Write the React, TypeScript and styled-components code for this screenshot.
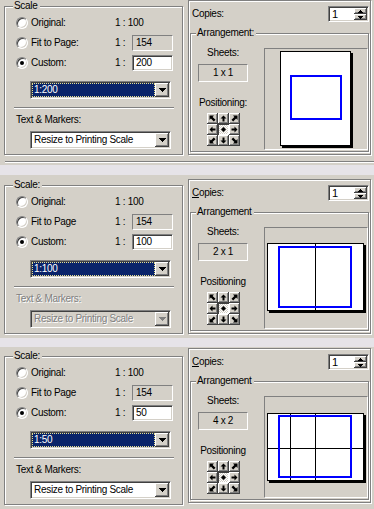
import React from "react";
import styled, { createGlobalStyle, css } from "styled-components";

const FACE = "#d4d0c8";
const SHADOW = "#808080";
const DARK = "#404040";
const NAVY = "#0a246a";

const GlobalStyle = createGlobalStyle`
  html, body { margin: 0; padding: 0; background: ${FACE}; }
  body { overflow: hidden; }
`;

const raised = css`
  background-color: ${FACE};
  box-shadow: inset -1px -1px 0 ${DARK}, inset 1px 1px 0 #fff,
    inset -2px -2px 0 ${SHADOW}, inset 2px 2px 0 ${FACE};
`;

const sunken = css`
  border: 1px solid;
  border-color: ${SHADOW} #fff #fff ${SHADOW};
  box-shadow: inset 1px 1px 0 ${DARK}, inset -1px -1px 0 ${FACE};
`;

const thin = css`
  border: 1px solid;
  border-color: ${SHADOW} #fff #fff ${SHADOW};
`;

const etched = css`
  position: relative;
  box-sizing: border-box;
  border: 1px solid ${SHADOW};
  box-shadow: inset 1px 1px 0 #fff, 1px 1px 0 #fff;
`;

const Screen = styled.div`
  width: 374px;
  height: 509px;
  overflow: hidden;
  display: flex;
  flex-direction: column;
  background: ${FACE};
  color: #000;
  font-family: "Liberation Sans", Arial, sans-serif;
  font-size: 10px;
  letter-spacing: -0.3px;
  line-height: 12px;
`;

const Panel = styled.section<{ $h: number }>`
  height: ${(p) => p.$h}px;
  flex: none;
  display: flex;
  flex-direction: column;
`;

const GroupsRow = styled.div`
  display: flex;
  align-items: flex-start;
  padding-left: 4px;
  flex: none;
`;

const Band = styled.div<{ $h: number }>`
  height: ${(p) => p.$h}px;
  flex: none;
  background: #e6e3e8;
`;

const EtchedRule = styled.div<{ $w: number; $ml: number; $mt: number }>`
  flex: none;
  width: ${(p) => p.$w}px;
  height: 0;
  margin: ${(p) => p.$mt}px 0 0 ${(p) => p.$ml}px;
  border-top: 1px solid ${SHADOW};
  border-bottom: 1px solid #fff;
`;

const ScaleGroup = styled.div<{ $mt: number }>`
  ${etched};
  flex: none;
  width: 179px;
  height: 149px;
  margin-top: ${(p) => p.$mt}px;
  padding-top: 6px;
  display: flex;
  flex-direction: column;
  align-items: flex-start;
`;

const Legend = styled.span<{ $left: number }>`
  position: absolute;
  top: -7px;
  left: ${(p) => p.$left}px;
  padding: 0 2px 0 1px;
  background: ${FACE};
  white-space: nowrap;
`;

const OptionRow = styled.div`
  display: flex;
  align-items: center;
  height: 20px;
  padding-left: 11px;
  white-space: pre;
`;

const Radio = styled.span<{ $on?: boolean }>`
  position: relative;
  flex: none;
  box-sizing: border-box;
  width: 12px;
  height: 12px;
  border-radius: 50%;
  background: #fff;
  border: 1px solid;
  border-color: ${SHADOW} #fff #fff ${SHADOW};
  box-shadow: inset 1px 1px 0 ${DARK}, inset -1px -1px 0 ${FACE};
  &::after {
    content: "";
    display: ${(p) => (p.$on ? "block" : "none")};
    position: absolute;
    left: 3px;
    top: 3px;
    width: 4px;
    height: 4px;
    border-radius: 50%;
    background: #000;
  }
`;

const OptionLabel = styled.span`
  width: 84px;
  margin-left: 3px;
`;

const RatioPrefix = styled.span`
  width: 17px;
`;

const Field = styled.div<{ $readonly?: boolean }>`
  box-sizing: border-box;
  width: 41px;
  height: 16px;
  display: flex;
  align-items: center;
  padding-left: 3px;
  ${(p) =>
    p.$readonly
      ? css`
          ${thin};
          background: ${FACE};
        `
      : css`
          ${sunken};
          background: #fff;
        `}
`;

const Combo = styled.div<{ $mt: number; $disabled?: boolean }>`
  box-sizing: border-box;
  width: 141px;
  height: 18px;
  margin: ${(p) => p.$mt}px 0 0 25px;
  padding: 1px;
  display: flex;
  ${sunken};
  background: ${(p) => (p.$disabled ? FACE : "#fff")};
`;

const ComboValue = styled.div<{ $selected?: boolean; $disabled?: boolean }>`
  flex: 1;
  display: flex;
  align-items: center;
  padding-left: 2px;
  white-space: nowrap;
  overflow: hidden;
  ${(p) =>
    p.$selected &&
    css`
      background: ${NAVY};
      color: #fff;
      outline: 1px dotted #e8e090;
      outline-offset: -1px;
    `}
  ${(p) =>
    p.$disabled &&
    css`
      color: ${SHADOW};
      text-shadow: 1px 1px 0 #fff;
    `}
`;

const ComboButton = styled.div`
  flex: none;
  width: 14px;
  height: 14px;
  display: flex;
  align-items: center;
  justify-content: center;
  ${raised};
`;

const Caption = styled.span<{ $disabled?: boolean }>`
  margin: 5px 0 0 11px;
  white-space: nowrap;
  ${(p) =>
    p.$disabled &&
    css`
      color: ${SHADOW};
      text-shadow: 1px 1px 0 #fff;
    `}
`;

const Pane = styled.div<{ $mt: number }>`
  ${etched};
  flex: none;
  width: 183px;
  height: 155px;
  margin: ${(p) => p.$mt}px 0 0 5px;
  display: flex;
  flex-direction: column;
`;

const CopiesRow = styled.div`
  display: flex;
  align-items: center;
  height: 16px;
  margin-top: 5px;
  padding: 0 1px 0 3px;
`;

const CopiesLabel = styled.span`
  flex: 1;
  white-space: nowrap;
`;

const Spin = styled.div`
  box-sizing: border-box;
  width: 41px;
  height: 16px;
  display: flex;
  padding: 1px;
  ${sunken};
  background: #fff;
`;

const SpinValue = styled.span`
  flex: 1;
  display: flex;
  align-items: center;
  padding-left: 2px;
  font-size: 11px;
`;

const SpinButtons = styled.div`
  display: flex;
  flex-direction: column;
  width: 13px;
`;

const SpinButton = styled.div`
  flex: 1;
  display: flex;
  align-items: center;
  justify-content: center;
  ${raised};
`;

const ArrangeGroup = styled.div`
  ${etched};
  flex: none;
  width: 179px;
  height: 119px;
  margin: 11px 0 0 1px;
  display: flex;
  align-items: flex-start;
`;

const SheetsColumn = styled.div`
  width: 64px;
  padding-top: 13px;
  display: flex;
  flex-direction: column;
  align-items: center;
`;

const SmallLabel = styled.span<{ $mt?: number }>`
  margin-top: ${(p) => p.$mt ?? 0}px;
  white-space: nowrap;
`;

const SheetsBox = styled.div`
  box-sizing: border-box;
  width: 50px;
  height: 18px;
  margin-top: 5px;
  display: flex;
  align-items: center;
  justify-content: center;
  ${thin};
`;

const PosGrid = styled.div`
  margin-top: 4px;
  display: grid;
  grid-template-columns: repeat(3, 11px);
  grid-auto-rows: 11px;
`;

const PosCell = styled.div<{ $pressed?: boolean }>`
  box-sizing: border-box;
  display: flex;
  align-items: center;
  justify-content: center;
  ${(p) =>
    p.$pressed
      ? css`
          background-color: #fff;
          background-image: conic-gradient(${FACE} 25%, #fff 0 50%, ${FACE} 0 75%, #fff 0);
          background-size: 2px 2px;
          box-shadow: inset 1px 1px 0 ${DARK}, inset -1px -1px 0 #fff;
        `
      : raised}
`;

const PreviewFrame = styled.div`
  box-sizing: border-box;
  width: 104px;
  height: 102px;
  margin: 14px 0 0 9px;
  ${thin};
  & > svg {
    display: block;
  }
`;

/* ---------- icons ---------- */

const DownTri = ({ disabled }: { disabled?: boolean }) => (
  <svg width="7" height="4" viewBox="0 0 7 4" shapeRendering="crispEdges">
    <polygon points="0,0 7,0 3.5,4" fill={disabled ? SHADOW : "#000"} />
  </svg>
);

const SmallTri = ({ up }: { up?: boolean }) => (
  <svg width="5" height="3" viewBox="0 0 5 3" shapeRendering="crispEdges">
    <polygon points={up ? "2.5,0 5,3 0,3" : "0,0 5,0 2.5,3"} fill="#000" />
  </svg>
);

const ARROW_N = "3.5,0.5 6.5,3.5 4.5,3.5 4.5,6.5 2.5,6.5 2.5,3.5 0.5,3.5";
const ARROW_NW = "0.5,0.5 5,0.5 3.6,1.9 6.5,4.8 4.8,6.5 1.9,3.6 0.5,5";
const DIAMOND = "3.5,1 6,3.5 3.5,6 1,3.5";

const PosArrow = ({ shape, rot }: { shape: string; rot: number }) => (
  <svg width="7" height="7" viewBox="0 0 7 7">
    <polygon points={shape} fill="#000" transform={`rotate(${rot} 3.5 3.5)`} />
  </svg>
);

const POS_CELLS: { shape: string; rot: number; pressed?: boolean }[] = [
  { shape: ARROW_NW, rot: 0 },
  { shape: ARROW_N, rot: 0 },
  { shape: ARROW_NW, rot: 90 },
  { shape: ARROW_N, rot: 270 },
  { shape: DIAMOND, rot: 0, pressed: true },
  { shape: ARROW_N, rot: 90 },
  { shape: ARROW_NW, rot: 270 },
  { shape: ARROW_N, rot: 180 },
  { shape: ARROW_NW, rot: 180 },
];

type PageCfg = {
  x: number;
  y: number;
  w: number;
  h: number;
  vlines: number[];
  hlines: number[];
  blue: [number, number, number, number];
};

const PagePreview = ({ cfg }: { cfg: PageCfg }) => (
  <svg width="102" height="100" viewBox="1 1 102 100">
    <rect x={cfg.x + 2} y={cfg.y + 2} width={cfg.w} height={cfg.h} fill="#000" />
    <rect
      x={cfg.x + 0.5}
      y={cfg.y + 0.5}
      width={cfg.w - 1}
      height={cfg.h - 1}
      fill="#fff"
      stroke="#000"
    />
    {cfg.vlines.map((v) => (
      <line key={`v${v}`} x1={v + 0.5} y1={cfg.y} x2={v + 0.5} y2={cfg.y + cfg.h} stroke="#000" />
    ))}
    {cfg.hlines.map((h) => (
      <line key={`h${h}`} x1={cfg.x} y1={h + 0.5} x2={cfg.x + cfg.w} y2={h + 0.5} stroke="#000" />
    ))}
    <rect
      x={cfg.blue[0] + 1}
      y={cfg.blue[1] + 1}
      width={cfg.blue[2] - 2}
      height={cfg.blue[3] - 2}
      fill="none"
      stroke="#0000ff"
      strokeWidth="2"
    />
  </svg>
);

/* ---------- data ---------- */

type PanelCfg = {
  h: number;
  groupTop: number;
  paneTop: number;
  legend: string;
  fit: string;
  custom: string;
  combo: string;
  tmDisabled: boolean;
  copiesKey: boolean;
  arrange: string;
  sheets: string;
  positioning: string;
  rule: boolean;
  band: number;
  page: PageCfg;
};

const PANELS: PanelCfg[] = [
  {
    h: 165,
    groupTop: 6,
    paneTop: 0,
    legend: "Scale",
    fit: "Fit to Page:",
    custom: "200",
    combo: "1:200",
    tmDisabled: false,
    copiesKey: false,
    arrange: "Arrangement:",
    sheets: "1 x 1",
    positioning: "Positioning:",
    rule: true,
    band: 10,
    page: { x: 16, y: 3, w: 71, h: 95, vlines: [], hlines: [], blue: [26, 27, 52, 45] },
  },
  {
    h: 163,
    groupTop: 10,
    paneTop: 4,
    legend: "Scale:",
    fit: "Fit to Page",
    custom: "100",
    combo: "1:100",
    tmDisabled: true,
    copiesKey: true,
    arrange: "Arrangement",
    sheets: "2 x 1",
    positioning: "Positioning",
    rule: false,
    band: 9,
    page: { x: 3, y: 16, w: 97, h: 68, vlines: [51], hlines: [], blue: [14, 19, 74, 62] },
  },
  {
    h: 162,
    groupTop: 9,
    paneTop: 1,
    legend: "Scale:",
    fit: "Fit to Page",
    custom: "50",
    combo: "1:50",
    tmDisabled: false,
    copiesKey: true,
    arrange: "Arrangement",
    sheets: "4 x 2",
    positioning: "Positioning",
    rule: false,
    band: 0,
    page: { x: 3, y: 17, w: 97, h: 68, vlines: [26, 51], hlines: [52], blue: [14, 19, 74, 63] },
  },
];

const PrintPanel = ({ cfg }: { cfg: PanelCfg }) => (
  <Panel $h={cfg.h}>
    <GroupsRow>
      <ScaleGroup $mt={cfg.groupTop}>
        <Legend $left={8}>{cfg.legend}</Legend>
        <OptionRow>
          <Radio />
          <OptionLabel>Original:</OptionLabel>
          <span>1 : 100</span>
        </OptionRow>
        <OptionRow>
          <Radio />
          <OptionLabel>{cfg.fit}</OptionLabel>
          <RatioPrefix>1 :</RatioPrefix>
          <Field $readonly>154</Field>
        </OptionRow>
        <OptionRow>
          <Radio $on />
          <OptionLabel>Custom:</OptionLabel>
          <RatioPrefix>1 :</RatioPrefix>
          <Field>{cfg.custom}</Field>
        </OptionRow>
        <Combo $mt={8}>
          <ComboValue $selected>{cfg.combo}</ComboValue>
          <ComboButton>
            <DownTri />
          </ComboButton>
        </Combo>
        <EtchedRule $w={160} $ml={9} $mt={8} />
        <Caption $disabled={cfg.tmDisabled}>Text &amp; Markers:</Caption>
        <Combo $mt={5} $disabled={cfg.tmDisabled}>
          <ComboValue $disabled={cfg.tmDisabled}>Resize to Printing Scale</ComboValue>
          <ComboButton>
            <DownTri disabled={cfg.tmDisabled} />
          </ComboButton>
        </Combo>
      </ScaleGroup>
      <Pane $mt={cfg.paneTop}>
        <CopiesRow>
          <CopiesLabel>
            {cfg.copiesKey ? (
              <>
                <u>C</u>opies:
              </>
            ) : (
              "Copies:"
            )}
          </CopiesLabel>
          <Spin>
            <SpinValue>1</SpinValue>
            <SpinButtons>
              <SpinButton>
                <SmallTri up />
              </SpinButton>
              <SpinButton>
                <SmallTri />
              </SpinButton>
            </SpinButtons>
          </Spin>
        </CopiesRow>
        <ArrangeGroup>
          <Legend $left={5}>{cfg.arrange}</Legend>
          <SheetsColumn>
            <SmallLabel>Sheets:</SmallLabel>
            <SheetsBox>{cfg.sheets}</SheetsBox>
            <SmallLabel $mt={15}>{cfg.positioning}</SmallLabel>
            <PosGrid>
              {POS_CELLS.map((c, i) => (
                <PosCell key={i} $pressed={c.pressed}>
                  <PosArrow shape={c.shape} rot={c.rot} />
                </PosCell>
              ))}
            </PosGrid>
          </SheetsColumn>
          <PreviewFrame>
            <PagePreview cfg={cfg.page} />
          </PreviewFrame>
        </ArrangeGroup>
      </Pane>
    </GroupsRow>
    {cfg.rule && <EtchedRule $w={369} $ml={5} $mt={6} />}
  </Panel>
);

export default function App() {
  return (
    <>
      <GlobalStyle />
      <Screen>
        {PANELS.map((p, i) => (
          <React.Fragment key={i}>
            <PrintPanel cfg={p} />
            {p.band > 0 && <Band $h={p.band} />}
          </React.Fragment>
        ))}
      </Screen>
    </>
  );
}
